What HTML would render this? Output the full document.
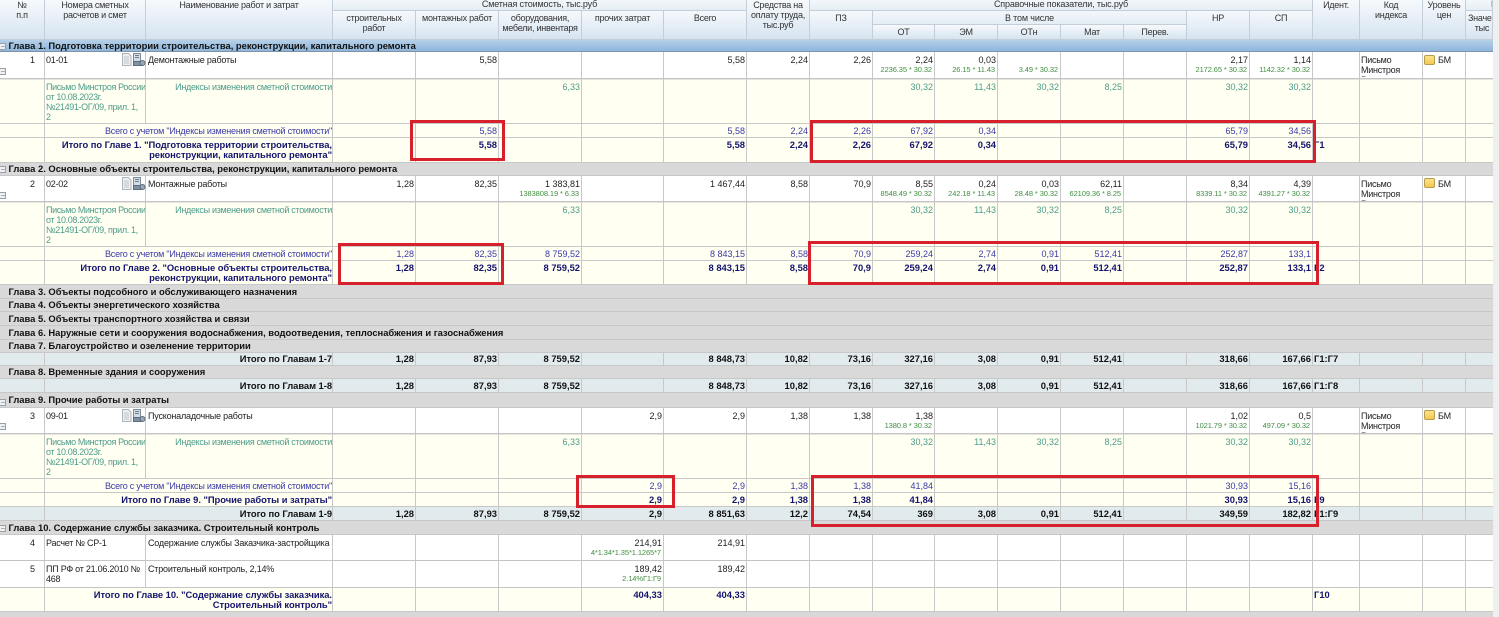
<!DOCTYPE html>
<html lang="ru"><head><meta charset="utf-8"><title>Сводный сметный расчет</title>
<style>
html,body{margin:0;padding:0;width:1499px;height:617px;overflow:hidden;background:#d8d8d8}
body{position:relative;font:9px/10px "Liberation Sans",sans-serif;color:#222;filter:blur(.25px)}
.sb{position:absolute;left:1493px;top:0;width:6px;height:617px;background:#efefef}
.h{position:absolute;box-sizing:border-box;border-right:1px solid #c3ced9;border-bottom:1px solid #c3ced9;background:linear-gradient(#f6f9fc,#d6e4f0);text-align:center;overflow:hidden;color:#333;letter-spacing:-.25px}
.s{background:linear-gradient(#f3f7fb,#e4edf5);letter-spacing:-.15px}
table{position:absolute;left:0;top:40px;width:1493px;table-layout:fixed;border-collapse:separate;border-spacing:0}
td{box-sizing:border-box;padding:3px 1px 0;vertical-align:top;text-align:right;border-right:1px solid #c8c8c8;border-bottom:1px solid #c8c8c8;overflow:hidden;white-space:nowrap}
td.l{text-align:left;letter-spacing:-.25px}
td.d{text-align:left;padding-left:2px;letter-spacing:-.2px}
td.n{padding-right:9px}
td:last-child{border-right:0}
tr.w td{background:#fff;border-bottom-color:#c4c4c4}
tr.y td{background:#fffff2;color:#4d9c8b;box-shadow:inset 0 1px #e6e6de}
tr.y td.l{letter-spacing:-.36px}
tr.b td{background:#fffff2;color:#3a3aa8;padding-top:2px}
tr.t td{background:#fffff2;color:#14146e;font-weight:bold;font-size:9.4px;padding-top:2px}
tr.g td{background:#d9d9d9;color:#111;font-weight:bold;font-size:9.4px;text-align:left;padding:0 0 0 8.500px;vertical-align:middle}
tr.c td{background:#e1eaed;color:#111;font-weight:bold;font-size:9.4px;padding-top:0;padding-bottom:0;vertical-align:middle}
tr.a td{background:linear-gradient(#b6d0e8,#8fb6dc);color:#111;font-weight:bold;font-size:9.4px;text-align:left;padding:0 0 0 8.500px;vertical-align:middle;border-bottom:1px solid #7f93a8}
td.nm{letter-spacing:-.22px;padding-right:0}
tr.y td.nm{letter-spacing:-.3px}
tr.t td.nm,tr.c td.nm{letter-spacing:-.04px}
tr.t td.l,tr.c td.l{letter-spacing:0}
small{display:block;font-size:7.5px;color:#3f8f3f;padding-right:1px;letter-spacing:-.1px}
.cl{height:22px;overflow:hidden;display:block}
.r{position:absolute;box-sizing:border-box;border:3px solid #d6202b}
.m{position:absolute;left:0;width:6px;height:7px;box-sizing:border-box;border:1px solid #9aa0a6;border-left:0;background:linear-gradient(90deg,#aab0b6 0,#aab0b6 100%) center/4px 1px no-repeat,#eef1f4}
svg{position:absolute}
.lv{position:absolute;left:1424px;width:11px;height:10px;box-sizing:border-box;border:1px solid #b89c4c;border-radius:2px;background:linear-gradient(#fbe48e,#f2c94f)}
</style></head><body>
<div class="sb"></div>

<div class="h" style="left:0;top:0;width:45px;height:40px">№<br>п.п</div>
<div class="h" style="left:45px;top:0;width:101px;height:40px">Номера сметных<br>расчетов и смет</div>
<div class="h" style="left:146px;top:0;width:187px;height:40px">Наименование работ и затрат</div>
<div class="h s" style="left:333px;top:0;width:414px;height:11px;line-height:9px">Сметная стоимость, тыс.руб</div>
<div class="h" style="left:333px;top:11px;width:83px;height:29px;padding-top:2px">строительных<br>работ</div>
<div class="h" style="left:416px;top:11px;width:83px;height:29px;padding-top:2px">монтажных работ</div>
<div class="h" style="left:499px;top:11px;width:83px;height:29px;padding-top:2px">оборудования,<br>мебели, инвентаря</div>
<div class="h" style="left:582px;top:11px;width:82px;height:29px;padding-top:2px">прочих затрат</div>
<div class="h" style="left:664px;top:11px;width:83px;height:29px;padding-top:2px">Всего</div>
<div class="h" style="left:747px;top:0;width:63px;height:40px">Средства на<br>оплату труда,<br>тыс.руб</div>
<div class="h s" style="left:810px;top:0;width:503px;height:11px;line-height:9px">Справочные показатели, тыс.руб</div>
<div class="h" style="left:810px;top:11px;width:63px;height:29px;padding-top:2px">ПЗ</div>
<div class="h s" style="left:873px;top:11px;width:314px;height:14px;padding-top:2px">В том числе</div>
<div class="h" style="left:873px;top:25px;width:62px;height:15px;padding-top:2px">ОТ</div>
<div class="h" style="left:935px;top:25px;width:63px;height:15px;padding-top:2px">ЭМ</div>
<div class="h" style="left:998px;top:25px;width:63px;height:15px;padding-top:2px">ОТн</div>
<div class="h" style="left:1061px;top:25px;width:63px;height:15px;padding-top:2px">Мат</div>
<div class="h" style="left:1124px;top:25px;width:63px;height:15px;padding-top:2px">Перев.</div>
<div class="h" style="left:1187px;top:11px;width:63px;height:29px;padding-top:2px">НР</div>
<div class="h" style="left:1250px;top:11px;width:63px;height:29px;padding-top:2px">СП</div>
<div class="h" style="left:1313px;top:0;width:47px;height:40px">Идент.</div>
<div class="h" style="left:1360px;top:0;width:63px;height:40px">Код<br>индекса</div>
<div class="h" style="left:1423px;top:0;width:43px;height:40px">Уровень<br>цен</div>
<div class="h s" style="left:1466px;top:0;width:27px;height:11px;line-height:9px;text-align:left;padding-left:25px">Г</div>
<div class="h" style="left:1466px;top:11px;width:27px;height:29px;padding-top:2px;text-align:left;padding-left:2px">Значе<br>&nbsp;&nbsp;&nbsp;тыс</div>

<table>
<colgroup><col style="width:45px"><col style="width:101px"><col style="width:187px"><col style="width:83px"><col style="width:83px"><col style="width:83px"><col style="width:82px"><col style="width:83px"><col style="width:63px"><col style="width:63px"><col style="width:62px"><col style="width:63px"><col style="width:63px"><col style="width:63px"><col style="width:63px"><col style="width:63px"><col style="width:63px"><col style="width:47px"><col style="width:63px"><col style="width:43px"><col style="width:27px"></colgroup>

<tr class="a" style="height:12px"><td colspan="21">Глава 1. Подготовка территории строительства, реконструкции, капитального ремонта</td></tr>
<tr class="w" style="height:27px"><td class="n">1</td><td class="l">01-01</td><td class="d">Демонтажные работы</td><td></td><td>5,58</td><td></td><td></td><td>5,58</td><td>2,24</td><td>2,26</td><td>2,24<small>2236.35 * 30.32</small></td><td>0,03<small>26.15 * 11.43</small></td><td>&nbsp;<small>3.49 * 30.32</small></td><td></td><td></td><td>2,17<small>2172.65 * 30.32</small></td><td>1,14<small>1142.32 * 30.32</small></td><td></td><td class="l"><span class="cl">Письмо<br>Минстроя<br>России</span></td><td class="l" style="padding-left:15px">БМ</td><td></td></tr>
<tr class="y" style="height:45px"><td></td><td class="l">Письмо Минстроя России<br>от 10.08.2023г.<br>№21491-ОГ/09, прил. 1,<br>2</td><td class="nm">Индексы изменения сметной стоимости</td><td></td><td></td><td>6,33</td><td></td><td></td><td></td><td></td><td>30,32</td><td>11,43</td><td>30,32</td><td>8,25</td><td></td><td>30,32</td><td>30,32</td><td></td><td></td><td></td><td></td></tr>
<tr class="b" style="height:14px"><td></td><td class="nm" colspan="2">Всего с учетом "Индексы изменения сметной стоимости"</td><td></td><td>5,58</td><td></td><td></td><td>5,58</td><td>2,24</td><td>2,26</td><td>67,92</td><td>0,34</td><td></td><td></td><td></td><td>65,79</td><td>34,56</td><td></td><td></td><td></td><td></td></tr>
<tr class="t" style="height:25px"><td></td><td class="nm" colspan="2">Итого по Главе 1. "Подготовка территории строительства,<br>реконструкции, капитального ремонта"</td><td></td><td>5,58</td><td></td><td></td><td>5,58</td><td>2,24</td><td>2,26</td><td>67,92</td><td>0,34</td><td></td><td></td><td></td><td>65,79</td><td>34,56</td><td class="l">Г1</td><td></td><td></td><td></td></tr>

<tr class="g" style="height:13px"><td colspan="21">Глава 2. Основные объекты строительства, реконструкции, капитального ремонта</td></tr>
<tr class="w" style="height:26px"><td class="n">2</td><td class="l">02-02</td><td class="d">Монтажные работы</td><td>1,28</td><td>82,35</td><td>1 383,81<small>1383808.19 * 6.33</small></td><td></td><td>1 467,44</td><td>8,58</td><td>70,9</td><td>8,55<small>8548.49 * 30.32</small></td><td>0,24<small>242.18 * 11.43</small></td><td>0,03<small>28.48 * 30.32</small></td><td>62,11<small>62109.36 * 8.25</small></td><td></td><td>8,34<small>8339.11 * 30.32</small></td><td>4,39<small>4391.27 * 30.32</small></td><td></td><td class="l"><span class="cl">Письмо<br>Минстроя<br>России</span></td><td class="l" style="padding-left:15px">БМ</td><td></td></tr>
<tr class="y" style="height:45px"><td></td><td class="l">Письмо Минстроя России<br>от 10.08.2023г.<br>№21491-ОГ/09, прил. 1,<br>2</td><td class="nm">Индексы изменения сметной стоимости</td><td></td><td></td><td>6,33</td><td></td><td></td><td></td><td></td><td>30,32</td><td>11,43</td><td>30,32</td><td>8,25</td><td></td><td>30,32</td><td>30,32</td><td></td><td></td><td></td><td></td></tr>
<tr class="b" style="height:14px"><td></td><td class="nm" colspan="2">Всего с учетом "Индексы изменения сметной стоимости"</td><td>1,28</td><td>82,35</td><td>8 759,52</td><td></td><td>8 843,15</td><td>8,58</td><td>70,9</td><td>259,24</td><td>2,74</td><td>0,91</td><td>512,41</td><td></td><td>252,87</td><td>133,1</td><td></td><td></td><td></td><td></td></tr>
<tr class="t" style="height:24px"><td></td><td class="nm" colspan="2">Итого по Главе 2. "Основные объекты строительства,<br>реконструкции, капитального ремонта"</td><td>1,28</td><td>82,35</td><td>8 759,52</td><td></td><td>8 843,15</td><td>8,58</td><td>70,9</td><td>259,24</td><td>2,74</td><td>0,91</td><td>512,41</td><td></td><td>252,87</td><td>133,1</td><td class="l">Г2</td><td></td><td></td><td></td></tr>

<tr class="g" style="height:14px"><td colspan="21">Глава 3. Объекты подсобного и обслуживающего назначения</td></tr>
<tr class="g" style="height:13px"><td colspan="21">Глава 4. Объекты энергетического хозяйства</td></tr>
<tr class="g" style="height:14px"><td colspan="21">Глава 5. Объекты транспортного хозяйства и связи</td></tr>
<tr class="g" style="height:14px"><td colspan="21">Глава 6. Наружные сети и сооружения водоснабжения, водоотведения, теплоснабжения и газоснабжения</td></tr>
<tr class="g" style="height:13px"><td colspan="21">Глава 7. Благоустройство и озеленение территории</td></tr>
<tr class="c" style="height:13px"><td></td><td class="nm" colspan="2">Итого по Главам 1-7</td><td>1,28</td><td>87,93</td><td>8 759,52</td><td></td><td>8 848,73</td><td>10,82</td><td>73,16</td><td>327,16</td><td>3,08</td><td>0,91</td><td>512,41</td><td></td><td>318,66</td><td>167,66</td><td class="l">Г1:Г7</td><td></td><td></td><td></td></tr>
<tr class="g" style="height:13px"><td colspan="21">Глава 8. Временные здания и сооружения</td></tr>
<tr class="c" style="height:14px"><td></td><td class="nm" colspan="2">Итого по Главам 1-8</td><td>1,28</td><td>87,93</td><td>8 759,52</td><td></td><td>8 848,73</td><td>10,82</td><td>73,16</td><td>327,16</td><td>3,08</td><td>0,91</td><td>512,41</td><td></td><td>318,66</td><td>167,66</td><td class="l">Г1:Г8</td><td></td><td></td><td></td></tr>

<tr class="g" style="height:15px"><td colspan="21">Глава 9. Прочие работы и затраты</td></tr>
<tr class="w" style="height:26px"><td class="n">3</td><td class="l">09-01</td><td class="d">Пусконаладочные работы</td><td></td><td></td><td></td><td>2,9</td><td>2,9</td><td>1,38</td><td>1,38</td><td>1,38<small>1380.8 * 30.32</small></td><td></td><td></td><td></td><td></td><td>1,02<small>1021.79 * 30.32</small></td><td>0,5<small>497.09 * 30.32</small></td><td></td><td class="l"><span class="cl">Письмо<br>Минстроя<br>России</span></td><td class="l" style="padding-left:15px">БМ</td><td></td></tr>
<tr class="y" style="height:45px"><td></td><td class="l">Письмо Минстроя России<br>от 10.08.2023г.<br>№21491-ОГ/09, прил. 1,<br>2</td><td class="nm">Индексы изменения сметной стоимости</td><td></td><td></td><td>6,33</td><td></td><td></td><td></td><td></td><td>30,32</td><td>11,43</td><td>30,32</td><td>8,25</td><td></td><td>30,32</td><td>30,32</td><td></td><td></td><td></td><td></td></tr>
<tr class="b" style="height:14px"><td></td><td class="nm" colspan="2">Всего с учетом "Индексы изменения сметной стоимости"</td><td></td><td></td><td></td><td>2,9</td><td>2,9</td><td>1,38</td><td>1,38</td><td>41,84</td><td></td><td></td><td></td><td></td><td>30,93</td><td>15,16</td><td></td><td></td><td></td><td></td></tr>
<tr class="t" style="height:14px"><td></td><td class="nm" colspan="2">Итого по Главе 9. "Прочие работы и затраты"</td><td></td><td></td><td></td><td>2,9</td><td>2,9</td><td>1,38</td><td>1,38</td><td>41,84</td><td></td><td></td><td></td><td></td><td>30,93</td><td>15,16</td><td class="l">Г9</td><td></td><td></td><td></td></tr>
<tr class="c" style="height:14px"><td></td><td class="nm" colspan="2">Итого по Главам 1-9</td><td>1,28</td><td>87,93</td><td>8 759,52</td><td>2,9</td><td>8 851,63</td><td>12,2</td><td>74,54</td><td>369</td><td>3,08</td><td>0,91</td><td>512,41</td><td></td><td>349,59</td><td>182,82</td><td class="l">Г1:Г9</td><td></td><td></td><td></td></tr>

<tr class="g" style="height:14px"><td colspan="21">Глава 10. Содержание службы заказчика. Строительный контроль</td></tr>
<tr class="w" style="height:26px"><td class="n">4</td><td class="l">Расчет № СР-1</td><td class="d">Содержание службы Заказчика-застройщика</td><td></td><td></td><td></td><td>214,91<small>4*1.34*1.35*1.1265*7</small></td><td>214,91</td><td></td><td></td><td></td><td></td><td></td><td></td><td></td><td></td><td></td><td></td><td></td><td></td><td></td></tr>
<tr class="w" style="height:27px"><td class="n">5</td><td class="l">ПП РФ от 21.06.2010 №<br>468</td><td class="d">Строительный контроль, 2,14%</td><td></td><td></td><td></td><td>189,42<small>2.14%Г1:Г9</small></td><td>189,42</td><td></td><td></td><td></td><td></td><td></td><td></td><td></td><td></td><td></td><td></td><td></td><td></td><td></td></tr>
<tr class="t" style="height:24px"><td></td><td class="nm" colspan="2">Итого по Главе 10. "Содержание службы заказчика.<br>Строительный контроль"</td><td></td><td></td><td></td><td>404,33</td><td>404,33</td><td></td><td></td><td></td><td></td><td></td><td></td><td></td><td></td><td></td><td class="l">Г10</td><td></td><td></td><td></td></tr>
</table>

<div class="m" style="top:43px"></div><div class="m" style="top:166px"></div><div class="m" style="top:399px"></div><div class="m" style="top:525px"></div>
<div class="m" style="top:68px"></div><div class="m" style="top:192px"></div><div class="m" style="top:423px"></div>

<svg style="left:121px;top:53px" width="25" height="13" viewBox="0 0 25 13"><path d="M1.500.5h6l2.500 2.500v9.500h-8.500z" fill="#eceff1" stroke="#b0b5ba"/><path d="M3 4h5M3 6h5M3 8h5M3 10h5" stroke="#c2c6ca"/><path d="M12.500 .5h7v8h-7z" fill="#d5dde4" stroke="#7d8b98"/><path d="M14 2.500h4M14 4.500h4" stroke="#6f7f8d"/><path d="M12.500 8.500h8v4h-8z" fill="#7f93a6" stroke="#5c6b78"/><circle cx="21.500" cy="10" r="2.500" fill="#9aa8b4" stroke="#5c6b78"/></svg>
<svg style="left:121px;top:177px" width="25" height="13" viewBox="0 0 25 13"><path d="M1.500.5h6l2.500 2.500v9.500h-8.500z" fill="#eceff1" stroke="#b0b5ba"/><path d="M3 4h5M3 6h5M3 8h5M3 10h5" stroke="#c2c6ca"/><path d="M12.500 .5h7v8h-7z" fill="#d5dde4" stroke="#7d8b98"/><path d="M14 2.500h4M14 4.500h4" stroke="#6f7f8d"/><path d="M12.500 8.500h8v4h-8z" fill="#7f93a6" stroke="#5c6b78"/><circle cx="21.500" cy="10" r="2.500" fill="#9aa8b4" stroke="#5c6b78"/></svg>
<svg style="left:121px;top:409px" width="25" height="13" viewBox="0 0 25 13"><path d="M1.500.5h6l2.500 2.500v9.500h-8.500z" fill="#eceff1" stroke="#b0b5ba"/><path d="M3 4h5M3 6h5M3 8h5M3 10h5" stroke="#c2c6ca"/><path d="M12.500 .5h7v8h-7z" fill="#d5dde4" stroke="#7d8b98"/><path d="M14 2.500h4M14 4.500h4" stroke="#6f7f8d"/><path d="M12.500 8.500h8v4h-8z" fill="#7f93a6" stroke="#5c6b78"/><circle cx="21.500" cy="10" r="2.500" fill="#9aa8b4" stroke="#5c6b78"/></svg>

<div class="lv" style="top:55px"></div><div class="lv" style="top:178px"></div><div class="lv" style="top:410px"></div>

<div class="r" style="left:410px;top:120px;width:95px;height:41px"></div>
<div class="r" style="left:810px;top:120px;width:506px;height:43px"></div>
<div class="r" style="left:338px;top:243px;width:166px;height:42px"></div>
<div class="r" style="left:808px;top:241px;width:511px;height:44px"></div>
<div class="r" style="left:576px;top:475px;width:99px;height:33px"></div>
<div class="r" style="left:811px;top:475px;width:508px;height:52px"></div>
</body></html>
